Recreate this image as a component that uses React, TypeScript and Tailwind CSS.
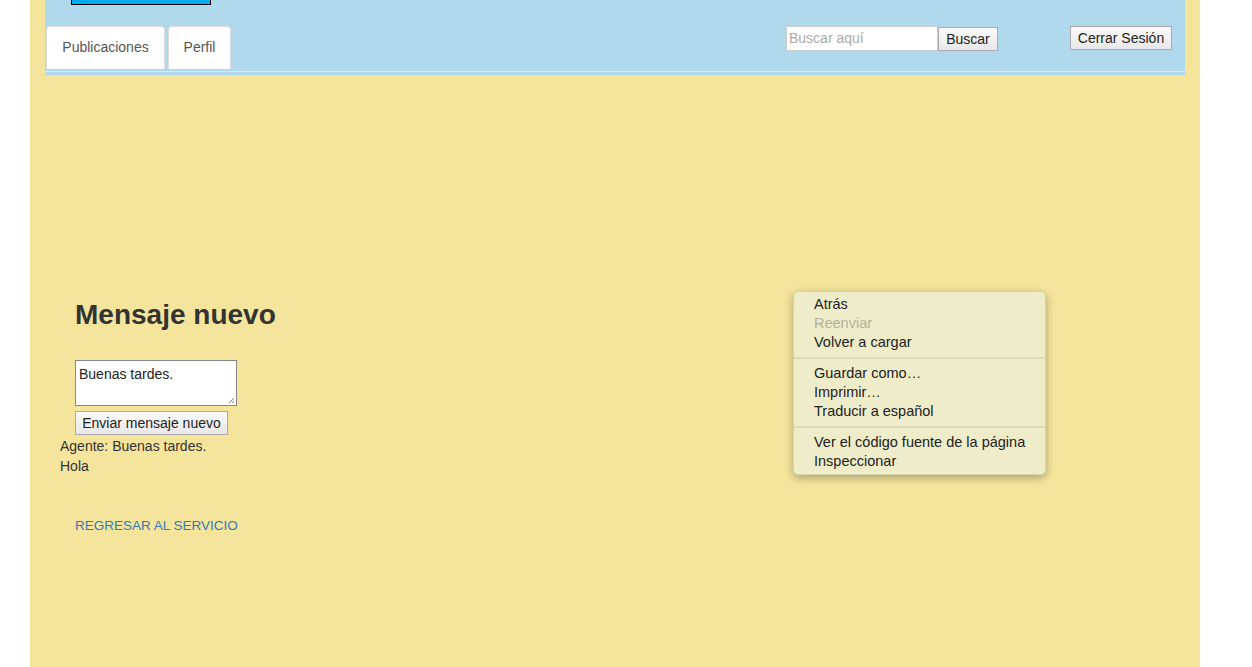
import React from "react"

export default function App() {
  const menu = [
    [
      { label: "Atrás" },
      { label: "Reenviar", disabled: true },
      { label: "Volver a cargar" },
    ],
    [{ label: "Guardar como…" }, { label: "Imprimir…" }, { label: "Traducir a español" }],
    [{ label: "Ver el código fuente de la página" }, { label: "Inspeccionar" }],
  ]

  return (
    <div className="min-h-screen bg-white font-['Liberation_Sans',Arial,sans-serif] text-[14px] text-[#333]">
      <div className="relative ml-[30px] min-h-screen w-[1170px] bg-[#f5e59c] px-[15px]">
        {/* header */}
        <div className="h-[75px] bg-[#b0d9ee]">
          <div className="ml-[26px] h-[5px] w-[140px] border border-t-0 border-black bg-[#00aeef]" />
          <div className="mt-[21px] flex items-start border-b border-[#d8e6ee]">
            <div className="flex h-[45px] items-start gap-[3px] pl-px">
              <div className="flex h-[43px] w-[119px] items-center justify-center rounded-t-[4px] border border-b-0 border-[#ddd] bg-white pb-px text-[#555]">
                Publicaciones
              </div>
              <div className="flex h-[43px] w-[63px] items-center justify-center rounded-t-[4px] border border-b-0 border-[#ddd] bg-white pb-px text-[#555]">
                Perfil
              </div>
            </div>
            <div className="ml-auto flex items-start">
              <div className="flex h-[25px] w-[152px] items-center border border-[#ccc] bg-white pl-[2px] text-[#aaa]">
                Buscar aquí
              </div>
              <div className="mt-px flex h-[24px] w-[60px] items-center justify-center border border-[#aaa] bg-gradient-to-b from-[#fafafa] to-[#e8e8e8] text-[#222]">
                Buscar
              </div>
            </div>
            <div className="ml-[72px] mr-[13px] flex h-[24px] w-[102px] items-center justify-center border border-[#aaa] bg-gradient-to-b from-[#fafafa] to-[#e8e8e8] text-[#222]">
              Cerrar Sesión
            </div>
          </div>
        </div>

        {/* content */}
        <div className="pt-[223px]">
          <h2 className="pl-[30px] text-[28px] font-bold leading-[33px] text-[#333]">Mensaje nuevo</h2>
          <div className="mt-[29px] pl-[30px]">
            <div className="relative h-[46px] w-[162px] border border-[#888] bg-white px-[3px] pt-[5px] text-[14px] leading-[16px] text-[#222]">
              Buenas tardes.
              <svg className="absolute bottom-px right-px" width="7" height="7" viewBox="0 0 7 7">
                <path d="M1 6L6 1M4 6L6 4" stroke="#888" strokeWidth="1" />
              </svg>
            </div>
            <div className="mt-[5px] flex h-[24px] w-[153px] items-center justify-center border border-[#aaa] bg-gradient-to-b from-[#fafafa] to-[#e8e8e8] text-[#222]">
              Enviar mensaje nuevo
            </div>
          </div>
          <div className="mt-px pl-[15px] leading-[20px]">
            <p>Agente: Buenas tardes.</p>
            <p>Hola</p>
          </div>
          <div className="mt-[40px] pl-[30px] text-[13.5px] leading-[20px] text-[#337ab7]">REGRESAR AL SERVICIO</div>
        </div>

        {/* context menu */}
        <div className="absolute left-[763px] top-[291px] w-[253px] rounded-[5px] border border-[#d6d3b0] bg-[#efedc9] py-[3px] text-[14.5px] leading-[19px] text-[#222] shadow-[0_3px_10px_rgba(0,0,0,0.3)]">
          {menu.map((group, gi) => (
            <div key={gi}>
              {gi > 0 && <div className="my-[5px] h-[2px] bg-[#dcd9b6]" />}
              {group.map((item) => (
                <div key={item.label} className={`pl-[20px] ${item.disabled ? "text-[#b3b09a]" : ""}`}>
                  {item.label}
                </div>
              ))}
            </div>
          ))}
        </div>
      </div>
    </div>
  )
}
